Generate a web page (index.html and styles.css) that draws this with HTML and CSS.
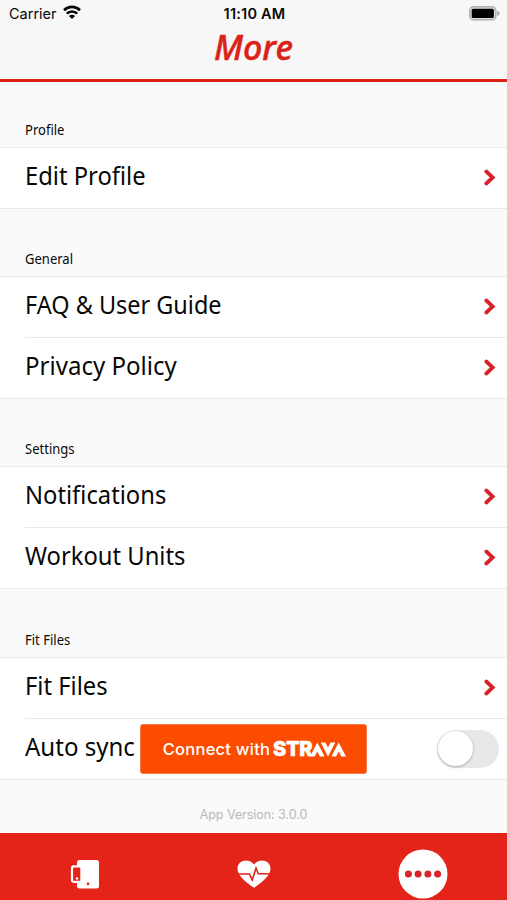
FILE: index.html
```html
<!DOCTYPE html>
<html lang="en">
<head>
<meta charset="utf-8">
<title>More</title>
<link rel="stylesheet" href="styles.css">
</head>
<body>
<svg width="0" height="0" class="defs"><symbol id="chevron" viewBox="0 0 12 17"><path d="M2.3 2.5 8.7 8.5 2.3 14.5" fill="none" stroke="#d9232a" stroke-width="3.8" stroke-linecap="round" stroke-linejoin="miter"/></symbol></svg>
<header class="header">
  <div class="status">
    <div class="carrier"><span>Carrier</span>
      <svg width="18" height="14" viewBox="0 0 18 14"><g fill="none" stroke="#080808" stroke-width="2.6"><path d="M1 5.2a11.4 11.4 0 0 1 16 0"/><path d="M3.8 8.6a7.4 7.4 0 0 1 10.4 0"/></g><path d="M9 14 5.9 11a4.4 4.4 0 0 1 6.2 0z" fill="#080808"/></svg>
    </div>
    <time class="time">11:10 AM</time>
    <svg class="battery" width="31" height="15" viewBox="0 0 31 15"><rect x=".8" y=".8" width="26" height="13" rx="3.6" fill="#ddd" stroke="#b0b0b0" stroke-width="1.5"/><rect x="2.7" y="2.7" width="22.2" height="9.2" rx="1.5"/><path d="M28.2 4.8q2.4.8 2.4 2.6t-2.4 2.6z" fill="#aaa"/></svg>
  </div>
  <h1 class="title">More</h1>
</header>
<main>
  <h2 class="heading first"><span>Profile</span></h2>
  <ul class="group">
    <li class="row"><span class="label edit">Edit Profile</span><svg class="chevron"><use href="#chevron"/></svg></li>
  </ul>
  <h2 class="heading"><span>General</span></h2>
  <ul class="group">
    <li class="row"><span class="label faq">FAQ &amp; User Guide</span><svg class="chevron"><use href="#chevron"/></svg></li>
    <li class="row"><span class="label privacy">Privacy Policy</span><svg class="chevron"><use href="#chevron"/></svg></li>
  </ul>
  <h2 class="heading"><span>Settings</span></h2>
  <ul class="group">
    <li class="row"><span class="label notifications">Notifications</span><svg class="chevron"><use href="#chevron"/></svg></li>
    <li class="row"><span class="label units">Workout Units</span><svg class="chevron"><use href="#chevron"/></svg></li>
  </ul>
  <h2 class="heading last"><span>Fit Files</span></h2>
  <ul class="group">
    <li class="row"><span class="label files">Fit Files</span><svg class="chevron"><use href="#chevron"/></svg></li>
    <li class="row"><span class="label sync">Auto sync</span>
      <button class="strava"><span class="connect">Connect with</span><span class="brand">STR<svg class="ava" width="36" height="15" viewBox="0 0 32 15" preserveAspectRatio="none" role="img" aria-label="AVA"><path d="M0 14.5 6.5 .5 13 14.5H8.8L6.5 9.5 4.2 14.5zM9.5 .5h4.2L16 5.5 18.3 .5h4.2L16 14.5zM19 14.5 25.5 .5 32 14.5h-4.2l-2.3-5-2.3 5z" fill="#fff"/></svg></span></button>
      <span class="toggle" role="switch" aria-checked="false"><span class="knob"></span></span>
    </li>
  </ul>
  <p class="version">App Version: 3.0.0</p>
</main>
<nav class="tabs">
  <span class="tab"><svg width="30" height="30" viewBox="0 0 30 30"><rect x="7" y="1" width="22" height="28.5" rx="2.5" fill="#fff"/><rect x="2" y="7.3" width="9.4" height="15.5" rx="1.6" fill="#e42319" stroke="#fff" stroke-width="2.2"/><circle cx="7" cy="19.5" r="1.3" fill="#fff"/><circle cx="18" cy="24.8" r="1.4" fill="#e42319"/></svg></span>
  <span class="tab"><svg width="34" height="30" viewBox="0 0 34 30"><path d="M17 28.8C13 26 .5 18 .5 9.5.5 1 12-1.5 17 5.5 22-1.5 33.5 1 33.5 9.5 33.5 18 21 26 17 28.8z" fill="#fff"/><path d="M0 15h12.5l2.7 6L19 9l2.3 5.7H34" fill="none" stroke="#e42319" stroke-width="1.6"/></svg></span>
  <span class="tab"><svg width="50" height="50" viewBox="0 0 50 50"><circle cx="25" cy="25" r="24.5" fill="#fff"/><g fill="#d9232a"><circle cx="10.4" cy="25" r="3.5"/><circle cx="20.1" cy="25" r="3.5"/><circle cx="29.9" cy="25" r="3.5"/><circle cx="39.6" cy="25" r="3.5"/></g></svg></span>
</nav>
</body>
</html>
```
FILE: styles.css
```css
* { box-sizing: border-box; }
body { margin: 0; height: 900px; overflow: hidden; display: flex; flex-direction: column; background: #fafafa; color: #080808; font-family: "Noto Sans", "Open Sans", sans-serif; }
h1, h2, ul, p { margin: 0; padding: 0; font-weight: 400; }
.defs { position: absolute; }
.header { height: 82px; flex: none; background: #f7f7f7; border-bottom: 3px solid #dc2118; }
.status { height: 28px; display: grid; grid-template-columns: 1fr auto 1fr; align-items: center; padding: 0 7px 0 9px; font-family: Inter, sans-serif; font-size: 14.5px; }
.carrier { display: flex; align-items: center; gap: 6px; margin-top: -2px; }
.carrier svg { margin-top: -2px; }
.time { font-weight: 600; font-size: 14.5px; letter-spacing: .2px; margin-top: -2px; }
.battery { justify-self: end; margin-top: -2px; }
.title { height: 40px; line-height: 38px; text-align: center; color: #dc2118; font-size: 34px; font-weight: 500; font-style: italic; -webkit-text-stroke: .5px #dc2118; }
.heading { height: 67px; padding: 41px 0 0 25px; font-size: 13.5px; line-height: 18px; }
.heading.last { height: 68px; padding-top: 42px; }
.heading.first { height: 65px; padding-top: 39px; }
.heading span { display: inline-block; transform: scaleX(.965); transform-origin: left; }
.group { list-style: none; background: #fff; border-top: 1px solid #e9e9e9; border-bottom: 1px solid #e9e9e9; }
.row { height: 60px; margin-left: 25px; padding-right: 11px; display: flex; align-items: center; justify-content: space-between; }
.row + .row { height: 61px; border-top: 1px solid #e9e9e9; }
.label { font-size: 25px; line-height: 34px; white-space: nowrap; margin-top: -7px; transform: scaleX(.95); transform-origin: left; }
.faq { transform: scaleX(.938); }
.privacy, .sync { transform: scaleX(.962); }
.chevron { width: 12px; height: 17px; margin-top: -1px; }
.row:has(.strava) { padding-right: 8px; }
.sync { width: 115px; }
.strava { width: 227px; height: 50px; flex: none; display: flex; align-items: center; padding: 0 0 0 19px; border: 1px solid #f47b49; border-radius: 3px; background: #fc4c02; color: #fff; font: 500 16.5px Inter, sans-serif; }
.connect { width: 113px; letter-spacing: .25px; white-space: nowrap; }
.brand { display: flex; align-items: center; font-weight: 900; font-size: 20px; letter-spacing: -.4px; -webkit-text-stroke: .3px #fff; }
.ava { margin-left: -2px; }
.toggle { width: 62px; height: 38px; margin-left: auto; flex: none; border-radius: 19px; background: #e8e8ea; padding: 1px; }
.knob { display: block; width: 35px; height: 35px; border-radius: 50%; background: #fff; box-shadow: 0 1px 3px #0004; }
.version { padding-top: 25px; text-align: center; font: 12.5px/20px Inter, sans-serif; color: #b8b8b8; letter-spacing: -.05px; }
.tabs { flex: none; height: 67px; margin-top: auto; display: grid; grid-template-columns: repeat(3, 1fr); background: #e42319; }
.tab { display: flex; align-items: center; justify-content: center; padding-top: 15px; }
```
